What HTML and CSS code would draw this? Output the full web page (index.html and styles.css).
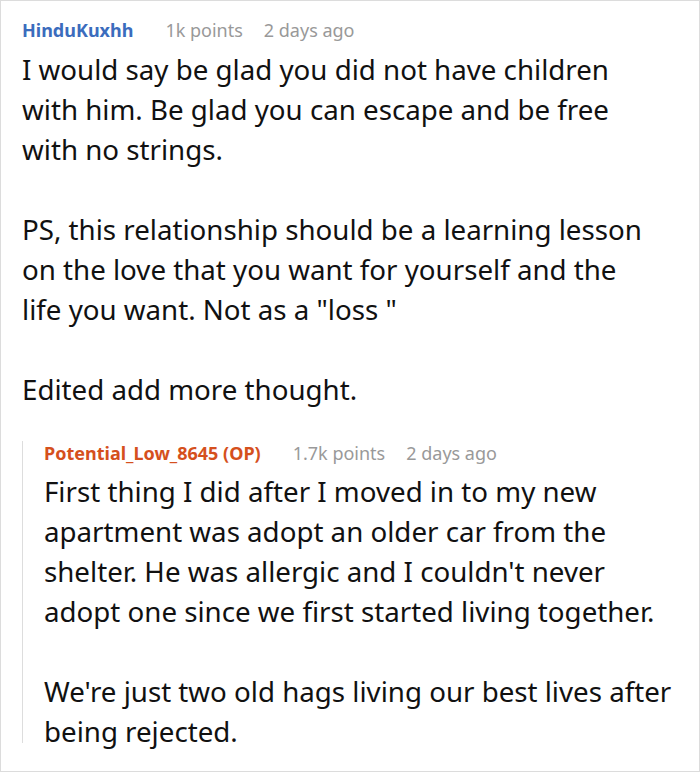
FILE: index.html
```html
<!DOCTYPE html>
<html>
<head>
<meta charset="utf-8">
<link rel="stylesheet" href="styles.css">
</head>
<body>
<div class="page">
  <div class="comment">
    <div class="meta">
      <span class="user">HinduKuxhh</span>
      <span class="points">1k points</span>
      <span class="time">2 days ago</span>
    </div>
    <div class="text">
      <p>I would say be glad you did not have children<br>with him. Be glad you can escape and be free<br>with no strings.</p>
      <p>PS, this relationship should be a learning lesson<br>on the love that you want for yourself and the<br>life you want. Not as a "loss "</p>
      <p>Edited add more thought.</p>
    </div>
    <div class="reply">
      <div class="meta reply-meta">
        <span class="user op">Potential_Low_8645 (OP)</span>
        <span class="points">1.7k points</span>
        <span class="time">2 days ago</span>
      </div>
      <div class="text">
        <p>First thing I did after I moved in to my new<br>apartment was adopt an older car from the<br>shelter. He was allergic and I couldn't never<br>adopt one since we first started living together.</p>
        <p>We're just two old hags living our best lives after<br>being rejected.</p>
      </div>
    </div>
  </div>
</div>
</body>
</html>
```
FILE: styles.css
```css
html, body {
  margin: 0;
  padding: 0;
  background: #fff;
}
.page {
  box-sizing: border-box;
  width: 700px;
  height: 772px;
  border: 1px solid #dcdcdc;
  overflow: hidden;
  font-family: "Noto Sans", "Open Sans", sans-serif;
  color: #111;
}
.comment {
  padding: 17px 0 0 21px;
}
.meta {
  display: flex;
  align-items: center;
  font-size: 18px;
  line-height: 24px;
  white-space: nowrap;
}
.user {
  font-weight: 700;
  color: #3b6cbd;
  margin-right: 32px;
}
.user.op {
  color: #d5501d;
}
.points {
  color: #999;
  margin-right: 21px;
}
.time {
  color: #999;
}
.text {
  margin-top: 7px;
  font-size: 27.7px;
  line-height: 40px;
  white-space: nowrap;
}
.text p {
  margin: 0 0 40px 0;
}
.text p:last-child {
  margin-bottom: 0;
}
.reply {
  margin-top: 43px;
  border-left: 1px solid #dddddd;
  padding-left: 21px;
  height: 302px;
}
.reply-meta {
  margin-top: -11px;
}
.reply .text {
  margin-top: 6px;
}
```
